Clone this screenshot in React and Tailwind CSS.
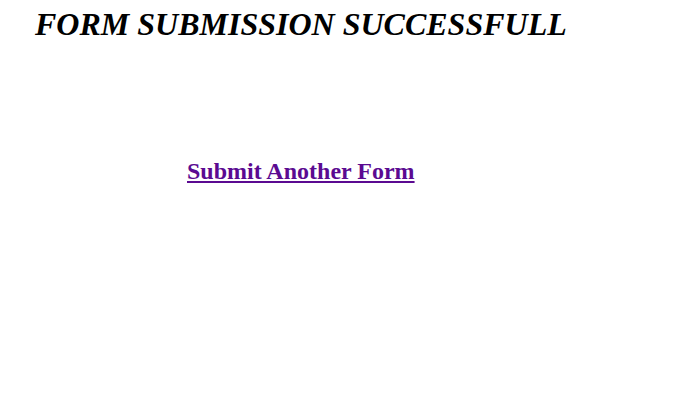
import React from "react";

const App = () => {
  return (
    <div className="w-full min-h-[411px] bg-white font-['Liberation_Serif',serif] text-black">
      <h1 className="pl-[35px] pt-[6px] text-[32px] leading-[37px] font-bold italic">
        FORM SUBMISSION SUCCESSFULL
      </h1>
      <div className="pl-[187px] pt-[114px]">
        <a href="#" className="text-[24px] leading-[28px] font-bold text-[#5b0a91] underline">
          Submit Another Form
        </a>
      </div>
    </div>
  );
};

export default App;
